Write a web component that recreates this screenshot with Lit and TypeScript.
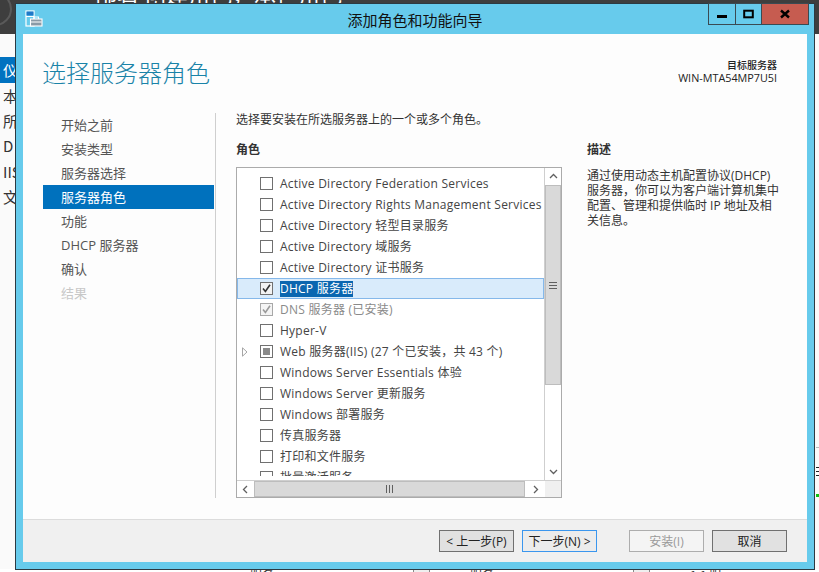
import { LitElement, html, css, svg } from "lit";
import { customElement } from "lit/decorators.js";

type Mark = "none" | "check" | "greycheck" | "partial";
interface Role { label: string; mark: Mark; selected?: boolean; disabled?: boolean; expander?: boolean; }

const ROLES: Role[] = [
  { label: "Active Directory Federation Services", mark: "none" },
  { label: "Active Directory Rights Management Services", mark: "none" },
  { label: "Active Directory 轻型目录服务", mark: "none" },
  { label: "Active Directory 域服务", mark: "none" },
  { label: "Active Directory 证书服务", mark: "none" },
  { label: "DHCP 服务器", mark: "check", selected: true },
  { label: "DNS 服务器 (已安装)", mark: "greycheck", disabled: true },
  { label: "Hyper-V", mark: "none" },
  { label: "Web 服务器(IIS) (27 个已安装，共 43 个)", mark: "partial", expander: true },
  { label: "Windows Server Essentials 体验", mark: "none" },
  { label: "Windows Server 更新服务", mark: "none" },
  { label: "Windows 部署服务", mark: "none" },
  { label: "传真服务器", mark: "none" },
  { label: "打印和文件服务", mark: "none" },
  { label: "批量激活服务", mark: "none" },
];

const STEPS = ["开始之前", "安装类型", "服务器选择", "服务器角色", "功能", "DHCP 服务器", "确认", "结果"];
const BACK_NAV = ["本", "所", "D", "IIS", "文"];

const chevron = (d: string) => html`<svg class="chev" width="9" height="9" viewBox="0 0 9 9"><path d=${d} fill="none" stroke="#606060" stroke-width="1.3"/></svg>`;

@customElement("app-root")
export class AppRoot extends LitElement {
  static styles = css`
    :host {
      display: block;
      position: relative;
      width: 819px;
      height: 572px;
      overflow: hidden;
      background: #fafafa;
      font-family: "Open Sans", "Noto Sans CJK SC", sans-serif;
      font-size: 12px;
      color: #333;
    }
    * { box-sizing: border-box; }
    .top {
      position: relative;
      height: 34px;
      background: #3e3e3e;
      overflow: hidden;
    }
    .top-circle {
      position: absolute;
      left: -22px;
      top: -8px;
      width: 34px;
      height: 34px;
      border: 2px solid #5a5a5a;
      border-radius: 50%;
    }
    .top-title {
      position: absolute;
      left: 95px;
      top: -21px;
      font-family: "Noto Sans CJK SC", sans-serif;
      font-size: 22px;
      line-height: 28px;
      white-space: nowrap;
      color: #fff;
    }
    .back-nav {
      display: flex;
      flex-direction: column;
      padding-top: 23px;
      width: 15px;
      overflow: hidden;
      font-family: "Noto Sans CJK SC", sans-serif;
      font-size: 15px;
      color: #333;
    }
    .back-nav div { height: 25.2px; line-height: 25px; padding-left: 3px; white-space: nowrap; }
    .back-nav .on { background: #0072c0; color: #fff; height: 26px; }

    .back-row { position: absolute; inset: 569px 0 0 0; height: 3px; background: #fff; }
    .back-row span {
      position: absolute;
      top: 0;
      font-family: "Noto Sans CJK SC", sans-serif;
      font-size: 12px;
      line-height: 12px;
      color: #333;
    }
    .back-row i { position: absolute; top: 0; height: 3px; width: 17px; background: #efefef; border: solid #888; border-width: 0 1px; }
    .back-right { position: absolute; left: 816px; width: 3px; }
    .br-line { top: 447px; height: 1px; background: #bbb; }
    .br-text { top: 467px; height: 11px; background: repeating-linear-gradient(#222 0 1px, #fff 1px 4px); }
    .br-green { top: 494px; height: 3px; background: #10c010; }

    .win {
      position: absolute;
      left: 15px;
      top: 3px;
      width: 800px;
      height: 567px;
      border: 1px solid #2c3a42;
      background: #67cbec;
      padding: 0 7px 7px;
      display: flex;
      flex-direction: column;
    }
    .titlebar {
      position: relative;
      height: 30px;
      flex: none;
      display: flex;
      align-items: center;
      justify-content: center;
      font-family: "Noto Sans CJK SC", sans-serif;
      font-size: 15px;
      color: #111;
    }
    .app-icon { position: absolute; left: 2px; top: 6px; }
    .ctrls {
      position: absolute;
      right: -2px;
      top: -1px;
      height: 22px;
      display: flex;
      border: 1px solid #3a4a52;
      border-top-width: 1px;
    }
    .ctrl {
      display: flex;
      align-items: center;
      justify-content: center;
      width: 27px;
      border-right: 1px solid #3a4a52;
    }
    .ctrl.max { width: 26px; }
    .ctrl.close { width: 46px; background: #c65c50; border-right: none; }

    .content {
      flex: 1;
      min-height: 0;
      display: flex;
      flex-direction: column;
      background: #fdfdfd;
    }
    .head {
      height: 79px;
      flex: none;
      display: flex;
      justify-content: space-between;
      padding: 0 30px 0 20px;
    }
    .head h1 {
      margin: 0 0 0 -1px;
      padding-top: 22px;
      font-family: "Noto Sans CJK SC", sans-serif;
      font-weight: 300;
      font-size: 24px;
      line-height: 32px;
      color: #1a83a8;
    }
    .target {
      padding-top: 24px;
      text-align: right;
      font-size: 10.8px;
      line-height: 13px;
      color: #222;
    }
    .target b { display: block; font-family: "Noto Sans CJK SC", sans-serif; font-weight: 500; font-size: 10px; }
    .body {
      flex: 1;
      min-height: 0;
      display: flex;
      padding-left: 20px;
    }
    .nav {
      width: 173px;
      height: 385px;
      padding-right: 1px;
      border-right: 1px solid #cfcfcf;
      flex: none;
      font-size: 13px;
    }
    .step {
      height: 24px;
      line-height: 24px;
      padding-left: 18px;
      color: #555;
    }
    .step.on { background: #0071bd; color: #fff; }
    .step.off { color: #c8c8c8; }
    .main {
      margin-left: 20px;
      display: grid;
      grid-template-columns: 326px 193px;
      grid-template-rows: 13px 41px 331px;
      column-gap: 25px;
      align-content: start;
    }
    .intro { grid-column: 1 / 3; padding-top: 1px; line-height: 12px; white-space: nowrap; color: #333; }
    .lbl {
      margin-top: 16px;
      height: 14px;
      line-height: 14px;
      font-family: "Noto Sans CJK SC", sans-serif;
      font-weight: 700;
      color: #333;
    }
    .list {
      border: 1px solid #ababab;
      display: flex;
      flex-direction: column;
      background: #fff;
    }
    .desc {
      margin: 0;
      padding-top: 1px;
      line-height: 15px;
      color: #333;
    }
    .list-top { flex: 1; min-height: 0; display: flex; }
    .rows { flex: 1; min-width: 0; height: 308px; padding-top: 5px; overflow: hidden; }
    .row {
      height: 21px;
      display: flex;
      align-items: center;
      white-space: nowrap;
      color: #444;
      letter-spacing: 0.24px;
    }
    .row.sel { background: #d9ebfb; box-shadow: inset 0 0 0 1px #85b8ea; }
    .row.dis { color: #8a8a8a; }
    .exp { width: 23px; flex: none; display: flex; justify-content: center; padding-right: 11px; padding-left: 4px; }
    .box {
      width: 13px;
      height: 13px;
      flex: none;
      border: 1px solid #707070;
      background: #fff;
      display: flex;
      align-items: center;
      justify-content: center;
      margin-right: 7px;
    }
    .row.sel .box { background: #f2f2f2; }
    .box.grey { border-color: #a8a8a8; background: #f4f4f4; }
    .box i { display: block; width: 7px; height: 7px; background: #8a8a8a; }
    .txt { display: inline-block; line-height: 16px; }
    .row.sel .txt { background: #0a66b0; color: #fff; }

    .vbar { width: 17px; flex: none; border-left: 1px solid #cfcfcf; display: flex; flex-direction: column; background: #fff; }
    .btn { display: flex; align-items: center; justify-content: center; flex: none; background: #fff; }
    .vbar .btn { height: 17px; }
    .vthumb {
      height: 200px;
      flex: none;
      background: #d9d9d9;
      border: 1px solid #bdbdbd;
      display: flex;
      align-items: center;
      justify-content: center;
    }
    .grip-h { width: 8px; height: 7px; background: repeating-linear-gradient(#606060 0 1px, transparent 1px 3px); }
    .track { flex: 1; background: #fff; }
    .hbar { height: 17px; flex: none; display: flex; border-top: 1px solid #cfcfcf; }
    .hbar .btn { width: 17px; }
    .hthumb {
      width: 271px;
      flex: none;
      background: #d9d9d9;
      border: 1px solid #bdbdbd;
      display: flex;
      align-items: center;
      justify-content: center;
    }
    .grip-v { width: 7px; height: 8px; background: repeating-linear-gradient(90deg, #606060 0 1px, transparent 1px 3px); }
    .hbar .btn.r { width: 20px; }
    .corner { flex: 1; background: #f0f0f0; }

    .foot {
      height: 43px;
      flex: none;
      background: #f0f0f0;
      border-top: 1px solid #dcdcdc;
      padding: 10px 20px 0 0;
      display: flex;
      justify-content: flex-end;
      gap: 8px;
    }
    .b {
      width: 75px;
      height: 22px;
      border: 1px solid #707070;
      background: #e1e1e1;
      display: flex;
      align-items: center;
      justify-content: center;
      color: #222;
      white-space: nowrap;
    }
    .b.next { border-color: #3a96ee; background: #ececec; margin-right: 24px; }
    .b.dis { border-color: #adadad; background: #f4f4f4; color: #9a9a9a; }
  `;

  private renderMark(m: Mark) {
    if (m === "check" || m === "greycheck") {
      const c = m === "check" ? "#333" : "#9a9a9a";
      return html`<span class="box ${m === "greycheck" ? "grey" : ""}">
        <svg width="11" height="11" viewBox="0 0 11 11"><path d="M2 5.5 L4.4 8.4 L9 1.8" fill="none" stroke=${c} stroke-width="1.6"/></svg>
      </span>`;
    }
    if (m === "partial") return html`<span class="box"><i></i></span>`;
    return html`<span class="box"></span>`;
  }

  private renderRow(r: Role) {
    const cls = `row ${r.selected ? "sel" : ""} ${r.disabled ? "dis" : ""}`;
    return html`<div class=${cls}>
      <span class="exp">${r.expander
        ? html`<svg width="6" height="10" viewBox="0 0 6 10"><path d="M.5 .8 L5 5 L.5 9.2 Z" fill="#fff" stroke="#a6a6a6"/></svg>`
        : ""}</span>
      ${this.renderMark(r.mark)}
      <span class="txt">${r.label}</span>
    </div>`;
  }

  render() {
    return html`
      <div class="top">
        <div class="top-circle"></div>
        <div class="top-title">部署 创建角色，承担角色</div>
      </div>
      <div class="back-nav">
        <div class="on">仪</div>
        ${BACK_NAV.map((t) => html`<div>${t}</div>`)}
      </div>
      <div class="back-row">
        <span style="left:250px">服务</span>
        <i style="left:413px"></i>
        <span style="left:470px">服务</span>
        <i style="left:633px"></i>
        <span style="left:690px">1.1 服</span>
      </div>
      <div class="back-right br-line"></div>
      <div class="back-right br-text"></div>
      <div class="back-right br-green"></div>

      <section class="win">
        <header class="titlebar">
          <svg class="app-icon" width="18" height="17" viewBox="0 0 18 17">
            ${svg`
              <rect x="1" y="1" width="8" height="15" fill="#67cbec" stroke="#fff" stroke-width="1.2"/>
              <rect x="1.5" y="1.5" width="7" height="4" fill="#1f78c8"/>
              <path d="M1 6.5 H9" stroke="#fff"/>
              <rect x="5.5" y="9" width="11.5" height="7" fill="#8a9aa6" stroke="#fff" stroke-width="1.1"/>
              <path d="M9 9 V7 H13.5 V9" fill="none" stroke="#fff" stroke-width="1.1"/>
              <path d="M6 12 H16.5" stroke="#fff"/>
            `}
          </svg>
          添加角色和功能向导
          <div class="ctrls">
            <div class="ctrl">
              <svg width="12" height="12" viewBox="0 0 12 12"><rect x="1" y="7" width="10" height="3" fill="#000"/></svg>
            </div>
            <div class="ctrl max">
              <svg width="12" height="12" viewBox="0 0 12 12"><rect x="1.2" y="2.7" width="8.6" height="6.6" fill="none" stroke="#000" stroke-width="2"/></svg>
            </div>
            <div class="ctrl close">
              <svg width="12" height="12" viewBox="0 0 12 12"><path d="M2 2.5 L10 9.5 M10 2.5 L2 9.5" stroke="#000" stroke-width="2.4"/></svg>
            </div>
          </div>
        </header>
        <div class="content">
          <div class="head">
            <h1>选择服务器角色</h1>
            <div class="target"><b>目标服务器</b>WIN-MTA54MP7U5I</div>
          </div>
          <div class="body">
            <nav class="nav">
              ${STEPS.map((s, i) => html`<div class="step ${i === 3 ? "on" : ""} ${i === 7 ? "off" : ""}">${s}</div>`)}
            </nav>
            <div class="main">
              <div class="intro">选择要安装在所选服务器上的一个或多个角色。</div>
              <div class="lbl">角色</div>
              <div class="lbl">描述</div>
              <div class="list">
                <div class="list-top">
                  <div class="rows">${ROLES.map((r) => this.renderRow(r))}</div>
                  <div class="vbar">
                    <div class="btn">${chevron("M1 6 L4.5 2.5 L8 6")}</div>
                    <div class="vthumb"><div class="grip-h"></div></div>
                    <div class="track"></div>
                    <div class="btn">${chevron("M1 3 L4.5 6.5 L8 3")}</div>
                  </div>
                </div>
                <div class="hbar">
                  <div class="btn">${chevron("M6 1 L2.5 4.5 L6 8")}</div>
                  <div class="hthumb"><div class="grip-v"></div></div>
                  <div class="btn r">${chevron("M3 1 L6.5 4.5 L3 8")}</div>
                  <div class="corner"></div>
                </div>
              </div>
              <div class="desc">通过使用动态主机配置协议(DHCP)服务器，你可以为客户端计算机集中配置、管理和提供临时 IP 地址及相关信息。</div>
            </div>
          </div>
          <footer class="foot">
            <div class="b">&lt; 上一步(P)</div>
            <div class="b next">下一步(N) &gt;</div>
            <div class="b dis">安装(I)</div>
            <div class="b">取消</div>
          </footer>
        </div>
      </section>
    `;
  }
}
